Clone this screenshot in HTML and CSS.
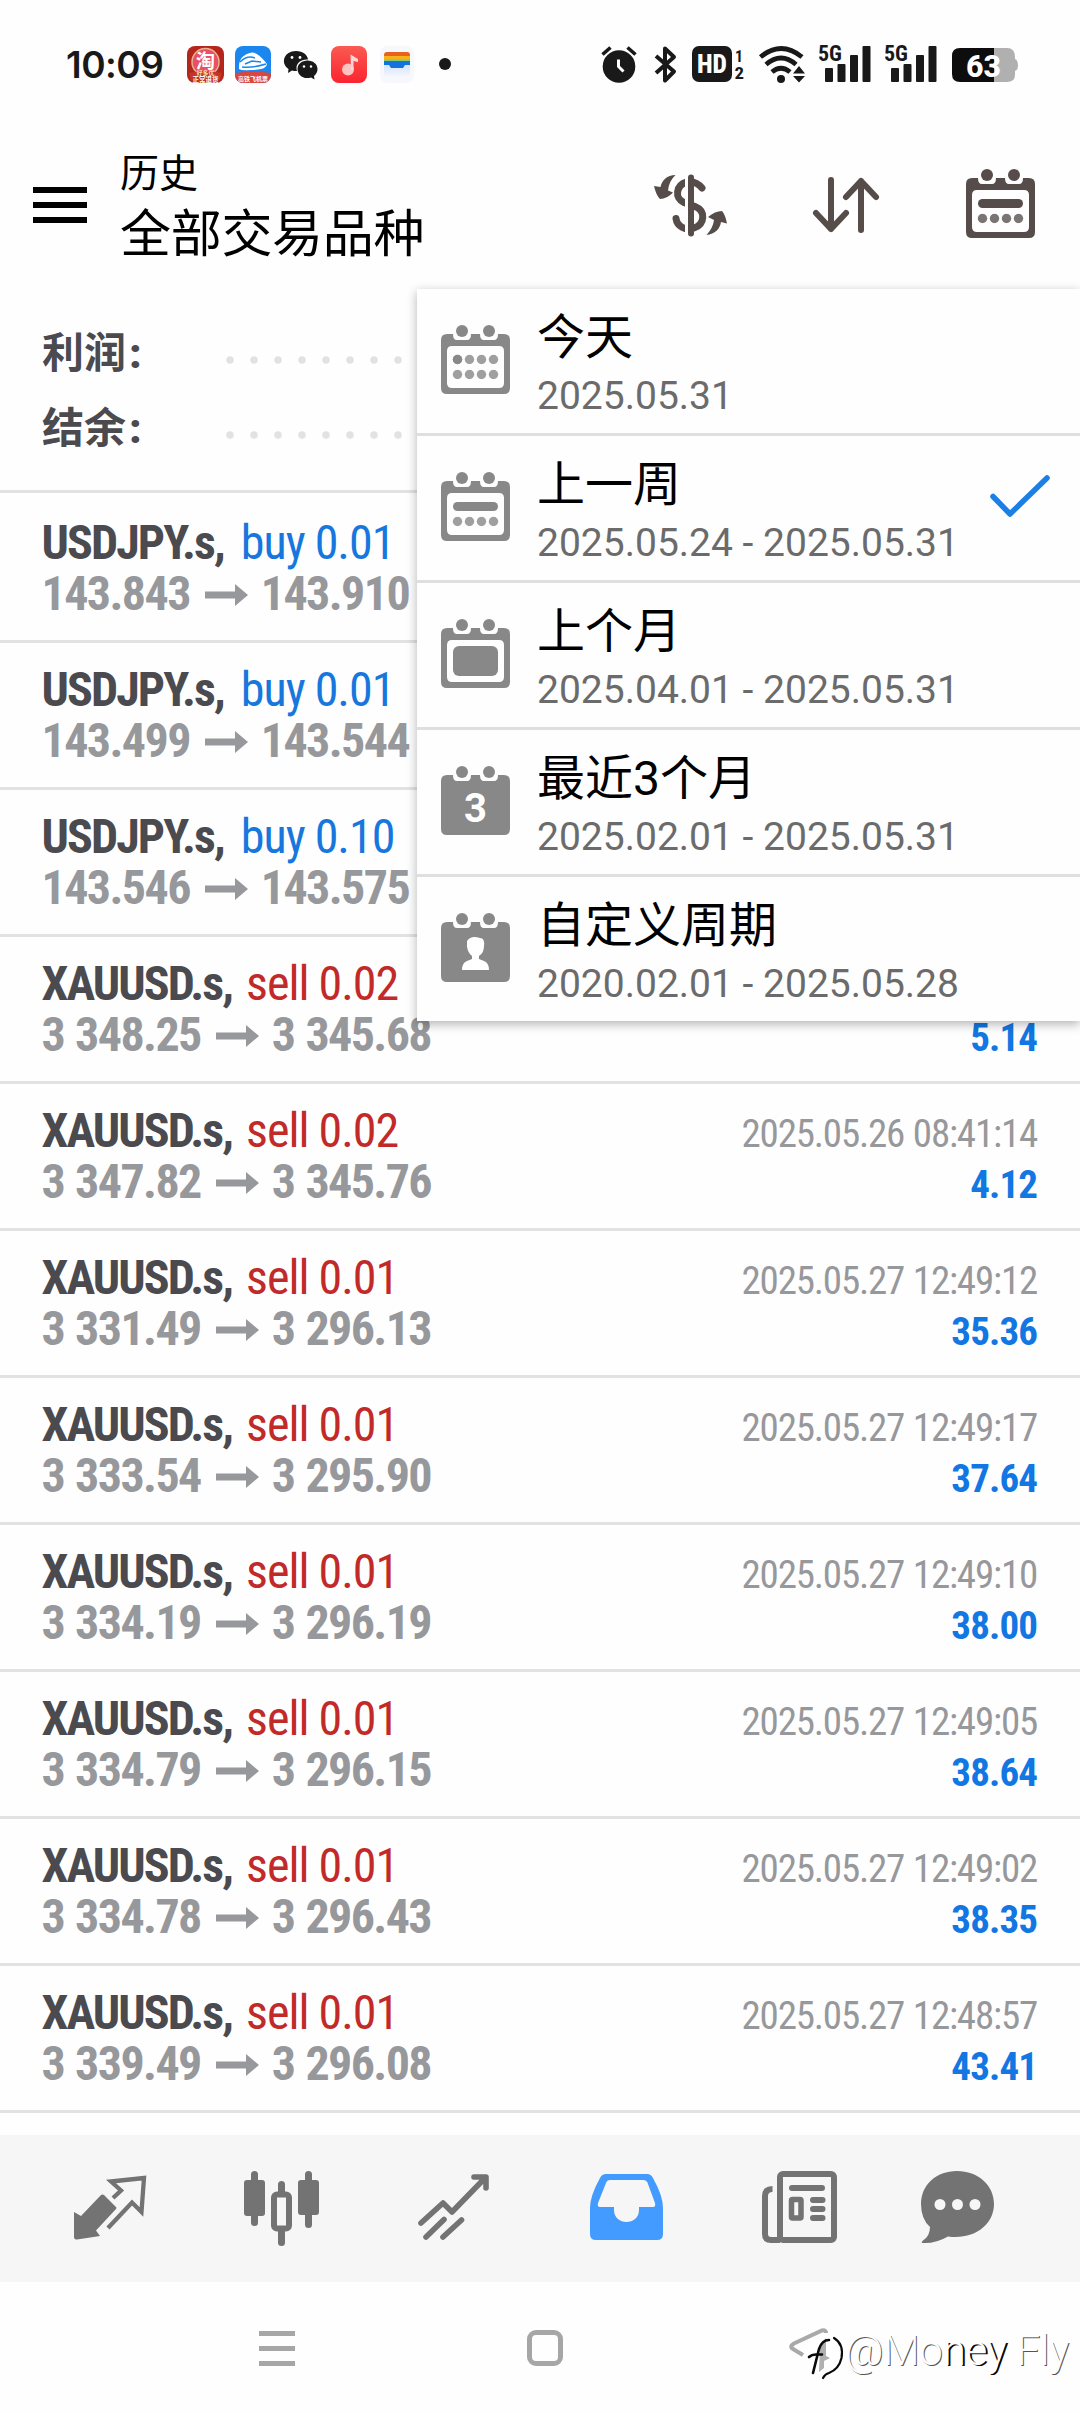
FILE: index.html
```html
<!DOCTYPE html>
<html lang="zh-CN">
<head>
<meta charset="utf-8">
<title>历史</title>
<link rel="stylesheet" href="styles.css">
</head>
<body>
<svg class="defs" width="0" height="0">
  <symbol id="signal" viewBox="0 0 52 38">
    <text x="-1" y="16" font-size="22" font-weight="700" textLength="24" lengthAdjust="spacingAndGlyphs">5G</text>
    <rect x="6" y="23" width="8" height="14" rx="1"/><rect x="18.500" y="19" width="8" height="18" rx="1"/>
    <rect x="31" y="10" width="8" height="27" rx="1"/><rect x="43.500" y="1" width="8" height="36" rx="1"/>
  </symbol>
  <symbol id="cal-frame" viewBox="0 0 69 69">
    <path fill-rule="evenodd" d="M6 9H12Q12 15 16 15H26Q30 15 30 9H39Q39 15 43 15H53Q57 15 57 9H63Q69 9 69 15V63Q69 69 63 69H6Q0 69 0 63V15Q0 9 6 9ZM11 21Q6 21 6 26V58Q6 63 11 63H58Q63 63 63 58V26Q63 21 58 21Z"/>
    <circle cx="21" cy="6" r="6"/><circle cx="48" cy="6" r="6"/>
  </symbol>
  <symbol id="cal-solid" viewBox="0 0 69 69">
    <path d="M6 9H12Q12 15 16 15H26Q30 15 30 9H39Q39 15 43 15H53Q57 15 57 9H63Q69 9 69 15V63Q69 69 63 69H6Q0 69 0 63V15Q0 9 6 9Z"/>
    <circle cx="21" cy="6" r="6"/><circle cx="48" cy="6" r="6"/>
  </symbol>
  <symbol id="cal-dots" viewBox="0 0 69 10">
    <circle cx="16.500" cy="5" r="4.700"/><circle cx="28.500" cy="5" r="4.700"/><circle cx="40.500" cy="5" r="4.700"/><circle cx="52.500" cy="5" r="4.700"/>
  </symbol>
  <symbol id="arrow" viewBox="0 0 43 22">
    <path d="M0 7.500H30V0L43 11L30 22V14.500H0Z"/>
  </symbol>
</svg>

<div class="status">
  <span class="clock">10:09</span>
  <svg class="app app-shop" width="37" height="37" viewBox="0 0 37 37">
    <rect width="37" height="37" rx="8" fill="#b3261c"/>
    <circle cx="18.500" cy="16" r="13.500" fill="#e8506a" stroke="#e9b28a" stroke-width="1.500"/>
    <text x="18.500" y="21.500" font-size="19" font-weight="700" text-anchor="middle" fill="#fff">淘</text>
    <path d="M2 27Q18 23 35 27L33 34Q18 38 4 34Z" fill="#c23528"/>
    <text x="18.500" y="29" font-size="6" font-weight="700" text-anchor="middle" fill="#f7dba0">好多优</text>
    <text x="18.500" y="35.500" font-size="6.500" font-weight="700" text-anchor="middle" fill="#fff">正常退货</text>
  </svg>
  <svg class="app app-train" width="36" height="37" viewBox="0 0 36 37">
    <defs><clipPath id="train-clip"><rect width="36" height="37" rx="8"/></clipPath></defs>
    <g clip-path="url(#train-clip)">
      <rect width="36" height="37" fill="#1b86ee"/>
      <path d="M4 23Q3 9 17 6.500Q23 6 32 18Q32 24 16 24Q7 25 4 23Z" fill="#fff"/>
      <path d="M5 16Q12 9 20 12M7 21Q18 22 31 18M10 18L17 15L26 16" fill="none" stroke="#1b86ee" stroke-width="1.500"/>
      <path d="M0 27Q18 24 36 27V37H0Z" fill="#d9463e"/>
      <text x="18" y="34.500" font-size="6" font-weight="700" text-anchor="middle" fill="#fff">高铁飞机票</text>
    </g>
  </svg>
  <svg class="app app-chat" width="34" height="29" viewBox="0 0 34 29">
    <path d="M12 0C19 0 23.500 4 24 8.500C17 8 12.500 12 12.500 17Q12.500 18.500 13 20Q11 20.300 8 19.500L4 22L4.500 18C-4 12 0 0 12 0Z" fill="#191919"/>
    <path d="M23.500 9.500C29 9.500 33.500 13 33.500 18Q33.500 22 30 25L30.500 28.500L27 26.500C19 29 13.500 23.500 13.500 18C13.500 13 18 9.500 23.500 9.500Z" fill="#191919"/>
    <g fill="#fff"><circle cx="8" cy="6.500" r="1.400"/><circle cx="16" cy="6.500" r="1.400"/><circle cx="20" cy="15.500" r="1.200"/><circle cx="27" cy="15.500" r="1.200"/></g>
  </svg>
  <svg class="app app-music" width="36" height="37" viewBox="0 0 36 37">
    <defs><linearGradient id="music" x1="0" y1="0" x2="0" y2="1"><stop offset="0" stop-color="#fb5a52"/><stop offset="1" stop-color="#fa2430"/></linearGradient></defs>
    <rect width="36" height="37" rx="8" fill="url(#music)"/>
    <circle cx="17" cy="23.500" r="6" fill="#fdc4c2"/>
    <path d="M19.500 8.500L27 13V16L22.500 15V24H20Z" fill="#fdd5d3"/>
  </svg>
  <svg class="app app-wallet" width="34" height="37" viewBox="0 0 34 37">
    <defs><linearGradient id="wallet" x1="0" y1="0" x2="0" y2="1"><stop offset="0" stop-color="#cfe0fb"/><stop offset="1" stop-color="#f6f8fc"/></linearGradient></defs>
    <rect width="34" height="37" rx="8" fill="#f7f8fc"/>
    <rect x="4" y="17" width="26" height="14" fill="url(#wallet)"/>
    <path d="M4 11V9Q4 6 7 6H27Q30 6 30 9V11Z" fill="#e8611e"/>
    <rect x="4" y="10" width="26" height="3" fill="#f6b21b"/><rect x="4" y="13" width="26" height="2.500" fill="#8ccb6d"/>
    <path d="M4 15H30V19H25L23 22H11L9 19H4Z" fill="#1472dd"/>
  </svg>
  <i class="more-dot"></i>
  <svg class="alarm" width="36" height="37" viewBox="0 0 36 37">
    <circle cx="18" cy="20.500" r="16.300"/>
    <path d="M1.500 8.500L9.500 1.500M34.500 8.500L26.500 1.500" stroke="#191919" stroke-width="3.600"/>
    <path d="M17.500 13.500V20.500L22.500 25.500" fill="none" stroke="#fff" stroke-width="3"/>
  </svg>
  <svg class="bluetooth" width="24" height="37" viewBox="0 0 24 37">
    <path d="M2 10L20 25.500L11 34.500V2.500L20 11L2 27" fill="none" stroke="#191919" stroke-width="4" stroke-linejoin="round"/>
  </svg>
  <svg class="hd" width="52" height="37" viewBox="0 0 52 37">
    <rect width="40" height="36" rx="7"/>
    <text x="5" y="27" font-size="25" font-weight="800" fill="#fff" textLength="30" lengthAdjust="spacingAndGlyphs">HD</text>
    <text x="43" y="15.500" font-size="17" font-weight="700" textLength="8" lengthAdjust="spacingAndGlyphs">1</text>
    <text x="42.500" y="33" font-size="17" font-weight="700" textLength="9.500" lengthAdjust="spacingAndGlyphs">2</text>
  </svg>
  <svg class="wifi" width="46" height="38" viewBox="0 0 46 38">
    <g fill="none" stroke="#191919" stroke-width="4.800">
      <path d="M1.500 11Q22 -6 43 11"/><path d="M7 18.500Q22 5.500 37 18.500"/><path d="M13 26Q22 18.500 31 26"/>
    </g>
    <circle cx="22" cy="33" r="4"/>
    <path d="M40 20L46 27.500H34ZM40 36.500L46 30H34Z"/>
  </svg>
  <svg class="signal" width="52" height="38"><use href="#signal"/></svg>
  <svg class="signal" width="52" height="38"><use href="#signal"/></svg>
  <svg class="battery" width="66" height="36" viewBox="0 0 66 36">
    <path d="M42 0H55Q63 0 63 9V11Q66 12 66 18Q66 22 63 23V27Q63 34 55 34H42Z" fill="#b0b0b0"/>
    <path d="M8 0H42V34H8Q0 34 0 26V8Q0 0 8 0Z" fill="#0d0d0d"/>
    <text x="14" y="28.500" font-size="31" font-weight="800" fill="#fff" textLength="35" lengthAdjust="spacingAndGlyphs">63</text>
  </svg>
</div>

<header class="appbar">
  <div class="burger"><i></i><i></i><i></i></div>
  <div class="titles"><div class="title-small">历史</div><div class="title-main">全部交易品种</div></div>
  <svg class="act-currency" width="74" height="64" viewBox="0 0 74 64">
    <g fill="none" stroke="#564c4a" stroke-width="7" stroke-linecap="round">
      <path d="M48 14C43 8 38 7 33 8C22 11 20 24 30 28.500L41 32.500C52 37 51 50 40 54C31 57 23 52 22 44.500"/>
    </g>
    <path d="M32.500 0V64" stroke="#fff" stroke-width="3"/>
    <path d="M37 3.500V59.500" stroke="#564c4a" stroke-width="6" stroke-linecap="round"/>
    <g fill="#564c4a">
      <path d="M21.500 1C13 1 8 6 6.500 13L0 12Q2 21 6 25Q13 25 19 18.500L14 16.500Q15 7 21.500 1Z"/>
      <path d="M52.500 61C61 60 66 55 67 48L73 49.500Q71 40 68 37Q61 37 54 43L60 46Q59 54 52.500 61Z"/>
    </g>
  </svg>
  <svg class="act-sort" width="66" height="56" viewBox="0 0 66 56">
    <path d="M18 3V52M3 36L18 52L33 36M48 53V4M33 20L48 4L63 20" fill="none" stroke="#564c4a" stroke-width="6" stroke-linecap="round" stroke-linejoin="round"/>
  </svg>
  <svg class="act-calendar" width="69" height="69" viewBox="0 0 69 69" fill="#564c4a">
    <use href="#cal-frame"/><rect x="12" y="30" width="45" height="9" rx="4.500"/><use href="#cal-dots" y="44.500" width="69" height="10" fill="#7a7472"/>
  </svg>
</header>

<main>
  <section class="summary">
    <div class="sum-row"><span>利润<b>:</b></span><svg width="176" height="8"><path d="M4 4H176"/></svg></div>
    <div class="sum-row"><span>结余<b>:</b></span><svg width="176" height="8"><path d="M4 4H176"/></svg></div>
  </section>
  <ul class="deals">
    <li><div class="deal"><div><b>USDJPY.s,</b> <span class="buy">buy 0.01</span></div><div class="price">143.843<svg><use href="#arrow"/></svg>143.910</div></div></li>
    <li><div class="deal"><div><b>USDJPY.s,</b> <span class="buy">buy 0.01</span></div><div class="price">143.499<svg><use href="#arrow"/></svg>143.544</div></div></li>
    <li><div class="deal"><div><b>USDJPY.s,</b> <span class="buy">buy 0.10</span></div><div class="price">143.546<svg><use href="#arrow"/></svg>143.575</div></div></li>
    <li><div class="deal"><div><b>XAUUSD.s,</b> <span class="sell">sell 0.02</span></div><div class="price">3 348.25<svg><use href="#arrow"/></svg>3 345.68</div></div><div class="result"><time></time><b>5.14</b></div></li>
    <li><div class="deal"><div><b>XAUUSD.s,</b> <span class="sell">sell 0.02</span></div><div class="price">3 347.82<svg><use href="#arrow"/></svg>3 345.76</div></div><div class="result"><time>2025.05.26 08:41:14</time><b>4.12</b></div></li>
    <li><div class="deal"><div><b>XAUUSD.s,</b> <span class="sell">sell 0.01</span></div><div class="price">3 331.49<svg><use href="#arrow"/></svg>3 296.13</div></div><div class="result"><time>2025.05.27 12:49:12</time><b>35.36</b></div></li>
    <li><div class="deal"><div><b>XAUUSD.s,</b> <span class="sell">sell 0.01</span></div><div class="price">3 333.54<svg><use href="#arrow"/></svg>3 295.90</div></div><div class="result"><time>2025.05.27 12:49:17</time><b>37.64</b></div></li>
    <li><div class="deal"><div><b>XAUUSD.s,</b> <span class="sell">sell 0.01</span></div><div class="price">3 334.19<svg><use href="#arrow"/></svg>3 296.19</div></div><div class="result"><time>2025.05.27 12:49:10</time><b>38.00</b></div></li>
    <li><div class="deal"><div><b>XAUUSD.s,</b> <span class="sell">sell 0.01</span></div><div class="price">3 334.79<svg><use href="#arrow"/></svg>3 296.15</div></div><div class="result"><time>2025.05.27 12:49:05</time><b>38.64</b></div></li>
    <li><div class="deal"><div><b>XAUUSD.s,</b> <span class="sell">sell 0.01</span></div><div class="price">3 334.78<svg><use href="#arrow"/></svg>3 296.43</div></div><div class="result"><time>2025.05.27 12:49:02</time><b>38.35</b></div></li>
    <li><div class="deal"><div><b>XAUUSD.s,</b> <span class="sell">sell 0.01</span></div><div class="price">3 339.49<svg><use href="#arrow"/></svg>3 296.08</div></div><div class="result"><time>2025.05.27 12:48:57</time><b>43.41</b></div></li>
  </ul>
</main>

<div class="menu">
  <div class="item">
    <svg width="69" height="69" viewBox="0 0 69 69"><use href="#cal-frame"/><use href="#cal-dots" y="29.500" width="69" height="10" opacity=".8"/><circle cx="16.500" cy="34.500" r="4.700"/><use href="#cal-dots" y="44.500" width="69" height="10" opacity=".8"/></svg>
    <div><div class="name">今天</div><div class="range">2025.05.31</div></div>
  </div>
  <div class="item">
    <svg width="69" height="69" viewBox="0 0 69 69"><use href="#cal-frame"/><rect x="12" y="30" width="45" height="9" rx="4.500"/><use href="#cal-dots" y="44.500" width="69" height="10" opacity=".8"/></svg>
    <div><div class="name">上一周</div><div class="range">2025.05.24 - 2025.05.31</div></div>
    <svg class="tick" width="60" height="43" viewBox="0 0 60 43"><path d="M3 21.500L20 39L57 3" fill="none" stroke="#1c7fe6" stroke-width="5.500" stroke-linecap="round" stroke-linejoin="round"/></svg>
  </div>
  <div class="item">
    <svg width="69" height="69" viewBox="0 0 69 69"><use href="#cal-frame"/><rect x="12" y="27" width="45" height="30" rx="6"/></svg>
    <div><div class="name">上个月</div><div class="range">2025.04.01 - 2025.05.31</div></div>
  </div>
  <div class="item">
    <svg width="69" height="69" viewBox="0 0 69 69"><use href="#cal-solid"/><text x="34.500" y="56" font-size="40" font-weight="700" text-anchor="middle" fill="#fff">3</text></svg>
    <div><div class="name">最近3个月</div><div class="range">2025.02.01 - 2025.05.31</div></div>
  </div>
  <div class="item">
    <svg width="69" height="69" viewBox="0 0 69 69"><use href="#cal-solid"/><path fill="#fff" d="M21 57Q21 50 26 48L31 46V43Q27 40 26 34V28Q30 22 39 25Q44 25 43 33Q43 40 38 43V46L43 48Q48 50 48 57Z"/></svg>
    <div><div class="name">自定义周期</div><div class="range">2020.02.01 - 2025.05.28</div></div>
  </div>
</div>

<nav class="tabs">
  <svg class="tab-quotes" width="74" height="66" viewBox="0 0 74 66">
    <path d="M1 36L8 40L28 19Q29.500 18 31 19L43 31Q44 32 43 33L23 54.500L27 60L4 63.500Q1 64 1 61Z" fill="#737373"/>
    <path d="M40 22L48 14.500L38 5.500L71 2L68.500 36L59 26.500L35 52" fill="none" stroke="#737373" stroke-width="4.300"/>
  </svg>
  <svg class="tab-chart" width="75" height="75" viewBox="0 0 75 75" fill="#737373">
    <rect x="7" y="0" width="7" height="55" rx="3.500"/><rect x="0" y="9" width="21" height="36" rx="3"/>
    <rect x="61" y="0" width="7" height="57" rx="3.500"/><rect x="54" y="9" width="21" height="35" rx="3"/>
    <rect x="34" y="10" width="7" height="65" rx="3.500"/><rect x="30" y="23.500" width="15" height="34" rx="3" fill="#f6f6f6" stroke="#737373" stroke-width="6"/>
  </svg>
  <svg class="tab-trade" width="72" height="68" viewBox="0 0 72 68" fill="none" stroke="#737373" stroke-width="5.600" stroke-linecap="round">
    <path d="M3 50L25 30L34 39L67 5M56 4H68V15" stroke-linejoin="round"/><path d="M8 64L26 46.500M25 64L43.500 47"/>
  </svg>
  <svg class="tab-history" width="73" height="66" viewBox="0 0 73 66">
    <path fill="#439bff" fill-rule="evenodd" d="M16 0H57Q61 0 63 4Q73 22 73 34V60Q73 66 67 66H6Q0 66 0 60V34Q0 22 10 4Q12 0 16 0ZM20 6Q17 6 16 9L8 29Q7 33 10 33H24V36C24 52 49 52 49 36V33H63Q66 33 65 29L58 10Q57 6 53 6Z"/>
  </svg>
  <svg class="tab-news" width="76" height="72" viewBox="0 0 76 72" fill="none" stroke="#737373" stroke-width="6">
    <rect x="18" y="3" width="54" height="66" rx="3"/><path d="M10.500 18Q3 18 3 25V63Q3 69 9 69H18" />
    <g stroke-linecap="round"><path d="M30 17H60M51 29H60.500M51 38H60.500M51 47H60.500"/></g><rect x="29.500" y="28.500" width="9.500" height="18.500" rx="1" stroke-width="5.500"/>
  </svg>
  <svg class="tab-chat" width="73" height="73" viewBox="0 0 73 73">
    <path fill="#737373" d="M36 0C57 0 73 14 73 33C73 54 53 69 27 65.500Q14 73 1 72Q0 71 2 69.500Q9 65 9 56Q0 48 0 33C0 14 15 0 36 0Z"/>
    <g fill="#f6f6f6"><circle cx="19" cy="33.500" r="5.500"/><circle cx="36.500" cy="33.500" r="5.500"/><circle cx="54" cy="33.500" r="5.500"/></g>
  </svg>
</nav>

<footer class="sysnav">
  <div class="sys-menu"><i></i><i></i><i></i></div>
  <div class="sys-home"></div>
  <svg class="sys-back" width="60" height="60" viewBox="0 0 60 60">
    <path d="M15 31L5 25Q1 22.500 6 19.500L34 6.500Q38 5.500 38 9" fill="none" stroke="#a9a9a9" stroke-width="4"/>
    <path d="M20 24Q26 8 42 10Q52 12 51 30Q50 44 38 49Q26 52 20 44Q16 34 20 24Z" fill="#fff"/>
    <path d="M32 22L38 14V32L42 34L36 37V44L31 48Z" fill="#b0b0b0"/>
    <g fill="none" stroke="#0a0a0a" stroke-linecap="round"><path d="M25 49L31 25Q34 16 41 16" stroke-width="2.600"/><path d="M21 33Q24 30 30 30.500H34" stroke-width="2.600"/><path d="M46 14Q56 20 53.500 34Q51 45 41 49Q37 50 35 54" stroke-width="2.200"/></g>
  </svg>
  <div class="mark">@Mo<span>ney</span> Fly</div>
</footer>
</body>
</html>
```
FILE: styles.css
```css
* { box-sizing: border-box; }
body {
  margin: 0;
  position: relative;
  width: 1080px;
  height: 2413px;
  overflow: hidden;
  background: #fefefe;
  color: #000;
  font-family: Roboto, "Noto Sans CJK SC", sans-serif;
  display: flex;
  flex-direction: column;
}
svg { display: block; flex: none; overflow: visible; }
.defs { position: absolute; }

.status { height: 128px; display: flex; align-items: flex-start; padding: 46px 0 0 66px; fill: #191919; font-family: Roboto, "Noto Sans CJK SC", sans-serif; }
.clock { width: 121px; font: 600 37px/37px Inter, sans-serif; letter-spacing: -0.5px; color: #191919; white-space: nowrap; }
.app-train { margin-left: 11px; }
.app-chat { margin: 5px 0 0 13px; }
.app-music { margin-left: 13px; }
.app-wallet { margin-left: 13px; }
.more-dot { width: 12px; height: 12px; border-radius: 50%; background: #191919; margin: 12px 150px 0 25px; }
.bluetooth { margin-left: 17px; }
.hd { margin-left: 14px; }
.wifi { margin-left: 15px; }
.signal { margin: -1px 0 0 14px; }
.battery { margin: 2px 0 0 15px; }
.hd, .signal { font-family: "Roboto Condensed", sans-serif; }

.appbar { height: 161px; display: flex; align-items: flex-start; padding-left: 33px; }
.burger { display: flex; flex-direction: column; gap: 9px; margin-top: 59px; width: 54px; }
.burger i { height: 6px; background: #000; }
.titles { margin: 22px 0 0 33px; width: 534px; white-space: nowrap; }
.title-small { font-size: 39px; line-height: 48px; }
.title-main { font-size: 51px; line-height: 60px; margin-top: 7px; letter-spacing: -0.3px; }
.act-currency { margin-top: 46px; }
.act-sort { margin: 49px 0 0 85px; }
.act-calendar { margin: 41px 0 0 87px; }

.summary { height: 204px; padding: 27px 0 0 42px; border-bottom: 3px solid #e2e2e2; }
.sum-row { display: flex; align-items: center; height: 75px; font: 700 42px/75px "Roboto Condensed", "Noto Sans CJK SC", sans-serif; color: #4a4a4f; }
.sum-row span { width: 184px; }
.sum-row b { margin-left: 3px; }
.sum-row svg { margin-top: 12px; fill: none; stroke: #e2e2e2; stroke-width: 7.500px; stroke-linecap: round; stroke-dasharray: 0 24; }

.deals { list-style: none; margin: 0; padding: 3px 0 0; }
.deals li { height: 147px; display: flex; justify-content: space-between; padding: 21px 43px 0 41.500px; border-bottom: 3px solid #e2e2e2; }
.deal { font: 400 48px/51px "Roboto Condensed", sans-serif; letter-spacing: -1px; white-space: nowrap; color: #4a4a4f; }
.deal b { letter-spacing: -1.900px; }
.buy { color: #1777dd; margin-left: 7px; }
.sell { color: #c22a2a; margin-left: 4px; }
.price { display: flex; align-items: center; font-weight: 700; color: #97989b; letter-spacing: -1.600px; word-spacing: 1.500px; }
.price svg { width: 43px; height: 22px; margin: 2px 13px 0 15px; fill: #97989b; }
.result { padding-top: 4px; display: flex; flex-direction: column; align-items: flex-end; font: 400 39px/51px "Roboto Condensed", sans-serif; color: #97989b; white-space: nowrap; }
.result time { height: 51px; letter-spacing: -1.200px; word-spacing: 1px; }
.result b { color: #1277e2; letter-spacing: -0.900px; }

.menu { position: absolute; left: 417px; top: 289px; width: 663px; height: 732px; background: #fefefe; box-shadow: 0 3px 10px rgba(0, 0, 0, .3); }
.item { height: 147px; display: flex; align-items: flex-start; padding: 22px 30px 0 24px; border-bottom: 3px solid #dfdfdf; fill: #888; }
.item:last-child { border-bottom: 0; }
.item > svg:first-child { margin: 14px 27px 0 0; }
.name { font-size: 48px; line-height: 54px; white-space: nowrap; }
.range { font-size: 39px; line-height: 48px; margin-top: 7px; color: #6b6b6b; white-space: nowrap; }
.tick { margin: 17px 0 0 auto; }

.tabs { margin-top: auto; height: 147px; flex: none; background: #f6f6f6; display: flex; align-items: flex-start; padding-left: 73px; }
.tab-quotes { margin-top: 41px; }
.tab-chart { margin: 36px 0 0 97px; }
.tab-trade { margin: 38px 0 0 99px; }
.tab-history { margin: 39px 0 0 100px; }
.tab-news { margin: 36px 0 0 99px; }
.tab-chat { margin: 36px 0 0 83px; }

.sysnav { height: 131px; flex: none; display: flex; align-items: flex-start; padding: 48px 0 0 259px; }
.sys-menu { width: 36px; display: flex; flex-direction: column; gap: 10px; margin-top: 1px; }
.sys-menu i { height: 5px; background: #a6a6a6; }
.sys-home { width: 36px; height: 36px; margin-left: 232px; border: 5px solid #a6a6a6; border-radius: 9px; }
.sys-back { margin: -6px 0 0 225px; }
.mark { font: 300 42px/48px Roboto, sans-serif; color: #fff; margin: -3px 0 0 -3px; white-space: nowrap; letter-spacing: -0.200px; text-shadow: 1px 1px 0 #555; }
.mark span { text-shadow: 2px 1px 0 #0a0a0a; }
```
